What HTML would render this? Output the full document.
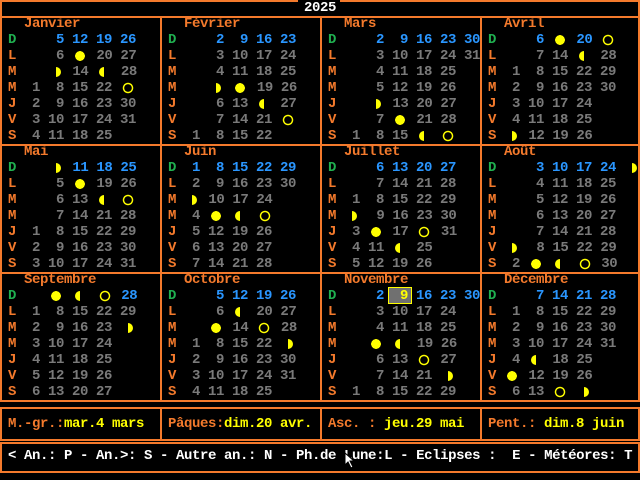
<!DOCTYPE html>
<html><head><meta charset="utf-8"><style>
*{margin:0;padding:0;box-sizing:border-box}
body{width:640px;height:480px;background:#000;position:relative;overflow:hidden;font-family:"Liberation Mono",monospace;font-size:14px;letter-spacing:-0.4px;font-weight:bold;line-height:16px}
.h{position:absolute;height:2px;background:#f47a2c}
.v{position:absolute;width:2px;background:#f47a2c}
.m{position:absolute;width:160px;height:128px;white-space:pre;color:#7a7a7a}
.m div{height:16px}
.n{color:#f47a2c;padding-left:24px}
.m div:not(.n){padding-left:8px}
.b{color:#2a96ff}
.o{color:#f47a2c}
.g{color:#20b050}
.y{color:#ffff00}
s{text-decoration:none}
i{display:inline-block;width:16px;height:16px;vertical-align:top;position:relative;margin-right:0.4px}
.F{background:radial-gradient(circle 5px at 8px 8px,#ff0 95%,transparent 100%)}
.N{background:radial-gradient(circle 5.5px at 8px 8px,transparent 65%,#ff0 72%,#ff0 90%,transparent 100%)}
.Q::after,.R::after{content:"";position:absolute;top:3px;width:5px;height:10px;background:#ff0}
.Q::after{left:8px;border-radius:0 5px 5px 0}
.R::after{left:3px;border-radius:5px 0 0 5px}
.t{position:absolute;white-space:pre}
</style></head><body>
<div class="h" style="left:0;top:0;width:298px"></div>
<div class="h" style="left:340px;top:0;width:300px"></div>
<div class="t" style="left:304px;top:0;color:#fff">2025</div>
<div class="h" style="left:0;top:16px;width:640px"></div>
<div class="h" style="left:0;top:144px;width:640px"></div>
<div class="h" style="left:0;top:272px;width:640px"></div>
<div class="h" style="left:0;top:400px;width:640px"></div>
<div class="v" style="left:0;top:0;height:401px"></div>
<div class="v" style="left:160px;top:16px;height:385px"></div>
<div class="v" style="left:320px;top:16px;height:385px"></div>
<div class="v" style="left:480px;top:16px;height:385px"></div>
<div class="v" style="left:638px;top:0;height:401px"></div>

<div class="h" style="left:0;top:407px;width:640px"></div>
<div class="h" style="left:0;top:439px;width:640px"></div>
<div class="v" style="left:0;top:407px;height:34px"></div>
<div class="v" style="left:160px;top:407px;height:34px"></div>
<div class="v" style="left:320px;top:407px;height:34px"></div>
<div class="v" style="left:480px;top:407px;height:34px"></div>
<div class="v" style="left:638px;top:407px;height:34px"></div>
<div class="h" style="left:0;top:442px;width:640px"></div>
<div class="h" style="left:0;top:471px;width:640px"></div>
<div class="v" style="left:0;top:442px;height:31px"></div>
<div class="v" style="left:638px;top:442px;height:31px"></div>

<div style="position:absolute;left:388px;top:287px;width:24px;height:17px;background:#707070;border:1px solid #ff0"></div>

<div class="m" style="left:0;top:16px"><div class="n">Janvier</div><div class="b"><s class="g">D</s>     5 12 19 26</div><div><s class="o">L</s>     6 <i class="F"></i> 20 27</div><div><s class="o">M</s>    <i class="Q"></i> 14 <i class="R"></i> 28</div><div><s class="o">M</s>  1  8 15 22 <i class="N"></i></div><div><s class="o">J</s>  2  9 16 23 30</div><div><s class="o">V</s>  3 10 17 24 31</div><div><s class="o">S</s>  4 11 18 25</div></div>

<div class="m" style="left:160px;top:16px"><div class="n">Février</div><div class="b"><s class="g">D</s>     2  9 16 23</div><div><s class="o">L</s>     3 10 17 24</div><div><s class="o">M</s>     4 11 18 25</div><div><s class="o">M</s>    <i class="Q"></i> <i class="F"></i> 19 26</div><div><s class="o">J</s>     6 13 <i class="R"></i> 27</div><div><s class="o">V</s>     7 14 21 <i class="N"></i></div><div><s class="o">S</s>  1  8 15 22</div></div>

<div class="m" style="left:320px;top:16px"><div class="n">Mars</div><div class="b"><s class="g">D</s>     2  9 16 23 30</div><div><s class="o">L</s>     3 10 17 24 31</div><div><s class="o">M</s>     4 11 18 25</div><div><s class="o">M</s>     5 12 19 26</div><div><s class="o">J</s>    <i class="Q"></i> 13 20 27</div><div><s class="o">V</s>     7 <i class="F"></i> 21 28</div><div><s class="o">S</s>  1  8 15 <i class="R"></i> <i class="N"></i></div></div>

<div class="m" style="left:480px;top:16px"><div class="n">Avril</div><div class="b"><s class="g">D</s>     6 <i class="F"></i> 20 <i class="N"></i></div><div><s class="o">L</s>     7 14 <i class="R"></i> 28</div><div><s class="o">M</s>  1  8 15 22 29</div><div><s class="o">M</s>  2  9 16 23 30</div><div><s class="o">J</s>  3 10 17 24</div><div><s class="o">V</s>  4 11 18 25</div><div><s class="o">S</s> <i class="Q"></i> 12 19 26</div></div>

<div class="m" style="left:0;top:144px"><div class="n">Mai</div><div class="b"><s class="g">D</s>    <i class="Q"></i> 11 18 25</div><div><s class="o">L</s>     5 <i class="F"></i> 19 26</div><div><s class="o">M</s>     6 13 <i class="R"></i> <i class="N"></i></div><div><s class="o">M</s>     7 14 21 28</div><div><s class="o">J</s>  1  8 15 22 29</div><div><s class="o">V</s>  2  9 16 23 30</div><div><s class="o">S</s>  3 10 17 24 31</div></div>

<div class="m" style="left:160px;top:144px"><div class="n">Juin</div><div class="b"><s class="g">D</s>  1  8 15 22 29</div><div><s class="o">L</s>  2  9 16 23 30</div><div><s class="o">M</s> <i class="Q"></i> 10 17 24</div><div><s class="o">M</s>  4 <i class="F"></i> <i class="R"></i> <i class="N"></i></div><div><s class="o">J</s>  5 12 19 26</div><div><s class="o">V</s>  6 13 20 27</div><div><s class="o">S</s>  7 14 21 28</div></div>

<div class="m" style="left:320px;top:144px"><div class="n">Juillet</div><div class="b"><s class="g">D</s>     6 13 20 27</div><div><s class="o">L</s>     7 14 21 28</div><div><s class="o">M</s>  1  8 15 22 29</div><div><s class="o">M</s> <i class="Q"></i>  9 16 23 30</div><div><s class="o">J</s>  3 <i class="F"></i> 17 <i class="N"></i> 31</div><div><s class="o">V</s>  4 11 <i class="R"></i> 25</div><div><s class="o">S</s>  5 12 19 26</div></div>

<div class="m" style="left:480px;top:144px"><div class="n">Août</div><div class="b"><s class="g">D</s>     3 10 17 24 <i class="Q"></i></div><div><s class="o">L</s>     4 11 18 25</div><div><s class="o">M</s>     5 12 19 26</div><div><s class="o">M</s>     6 13 20 27</div><div><s class="o">J</s>     7 14 21 28</div><div><s class="o">V</s> <i class="Q"></i>  8 15 22 29</div><div><s class="o">S</s>  2 <i class="F"></i> <i class="R"></i> <i class="N"></i> 30</div></div>

<div class="m" style="left:0;top:272px"><div class="n">Septembre</div><div class="b"><s class="g">D</s>    <i class="F"></i> <i class="R"></i> <i class="N"></i> 28</div><div><s class="o">L</s>  1  8 15 22 29</div><div><s class="o">M</s>  2  9 16 23 <i class="Q"></i></div><div><s class="o">M</s>  3 10 17 24</div><div><s class="o">J</s>  4 11 18 25</div><div><s class="o">V</s>  5 12 19 26</div><div><s class="o">S</s>  6 13 20 27</div></div>

<div class="m" style="left:160px;top:272px"><div class="n">Octobre</div><div class="b"><s class="g">D</s>     5 12 19 26</div><div><s class="o">L</s>     6 <i class="R"></i> 20 27</div><div><s class="o">M</s>    <i class="F"></i> 14 <i class="N"></i> 28</div><div><s class="o">M</s>  1  8 15 22 <i class="Q"></i></div><div><s class="o">J</s>  2  9 16 23 30</div><div><s class="o">V</s>  3 10 17 24 31</div><div><s class="o">S</s>  4 11 18 25</div></div>

<div class="m" style="left:320px;top:272px"><div class="n">Novembre</div><div class="b"><s class="g">D</s>     2  <s class="y">9</s> 16 23 30</div><div><s class="o">L</s>     3 10 17 24</div><div><s class="o">M</s>     4 11 18 25</div><div><s class="o">M</s>    <i class="F"></i> <i class="R"></i> 19 26</div><div><s class="o">J</s>     6 13 <i class="N"></i> 27</div><div><s class="o">V</s>     7 14 21 <i class="Q"></i></div><div><s class="o">S</s>  1  8 15 22 29</div></div>

<div class="m" style="left:480px;top:272px"><div class="n">Décembre</div><div class="b"><s class="g">D</s>     7 14 21 28</div><div><s class="o">L</s>  1  8 15 22 29</div><div><s class="o">M</s>  2  9 16 23 30</div><div><s class="o">M</s>  3 10 17 24 31</div><div><s class="o">J</s>  4 <i class="R"></i> 18 25</div><div><s class="o">V</s> <i class="F"></i> 12 19 26</div><div><s class="o">S</s>  6 13 <i class="N"></i> <i class="Q"></i></div></div>

<div class="t" style="left:8px;top:416px"><s class="o">M.-gr.:</s><s class="y">mar.4 mars</s></div>
<div class="t" style="left:168px;top:416px"><s class="o">Pâques:</s><s class="y">dim.20 avr.</s></div>
<div class="t" style="left:328px;top:416px"><s class="o">Asc. : </s><s class="y">jeu.29 mai</s></div>
<div class="t" style="left:488px;top:416px"><s class="o">Pent.: </s><s class="y">dim.8 juin</s></div>

<div class="t" style="left:8px;top:448px;color:#fff">&lt; An.: P - An.&gt;: S - Autre an.: N - Ph.de Lune:L - Eclipses :  E - Météores: T</div>

<svg style="position:absolute;left:344px;top:452px" width="14" height="18" viewBox="0 0 14 18"><path d="M1 1 L1 13 L4 10 L7 16 L9 15 L6 9 L10 9 Z" fill="#fff" stroke="#000" stroke-width="1"/></svg>
</body></html>
